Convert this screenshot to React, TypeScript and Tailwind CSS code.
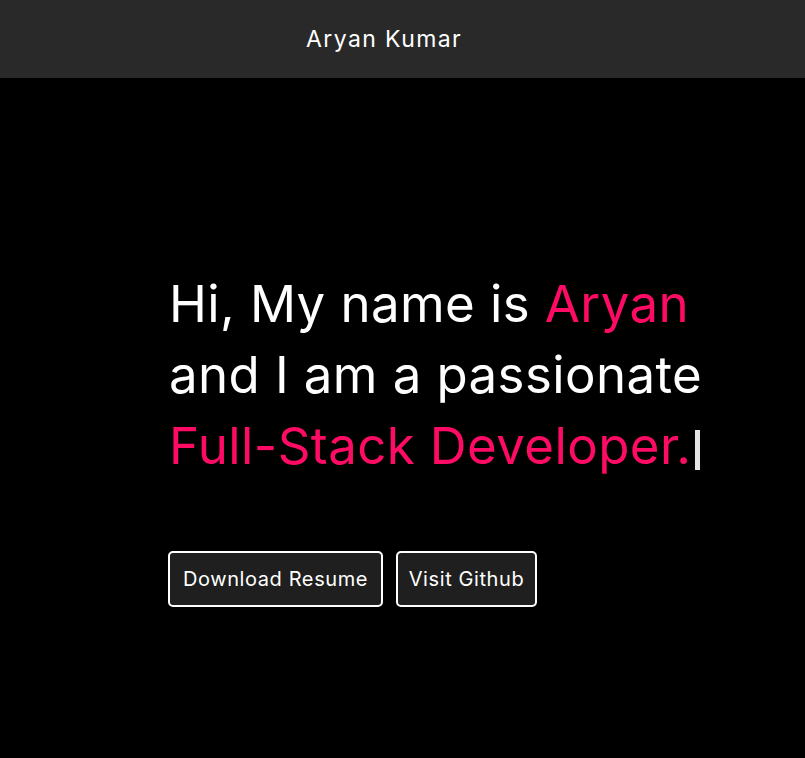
export default function App() {
  const font = { fontFamily: "Inter, 'Open Sans', sans-serif" };
  return (
    <div className="min-h-[758px] w-full bg-black" style={font}>
      <header className="flex h-[78px] items-center bg-[#292929] pl-[306px]">
        <span className="text-[23px] tracking-[1.4px] text-white">Aryan Kumar</span>
      </header>
      <main className="pl-[168px] pt-[190px]">
        <h1 className="pl-[1px] text-[51px] leading-[71px] tracking-[0.4px] text-white">
          Hi, My name is <span className="text-[#ff0a64]">Aryan</span>
          <br />
          and I am a passionate
          <br />
          <span className="text-[#ff0a64]">Full-Stack Developer.</span>
          <span className="ml-[4px] inline-block h-[40px] w-[5px] bg-[#e5e5e5] align-[-6px]" />
        </h1>
        <div className="mt-[70px] flex gap-[13px]">
          <button className="h-[56px] w-[215px] rounded-[5px] border-2 border-white bg-[#1f1f1f] text-[20px] tracking-[0.6px] text-white">
            Download Resume
          </button>
          <button className="h-[56px] w-[141px] rounded-[5px] border-2 border-white bg-[#1f1f1f] text-[20px] tracking-[0.6px] text-white">
            Visit Github
          </button>
        </div>
      </main>
    </div>
  );
}
